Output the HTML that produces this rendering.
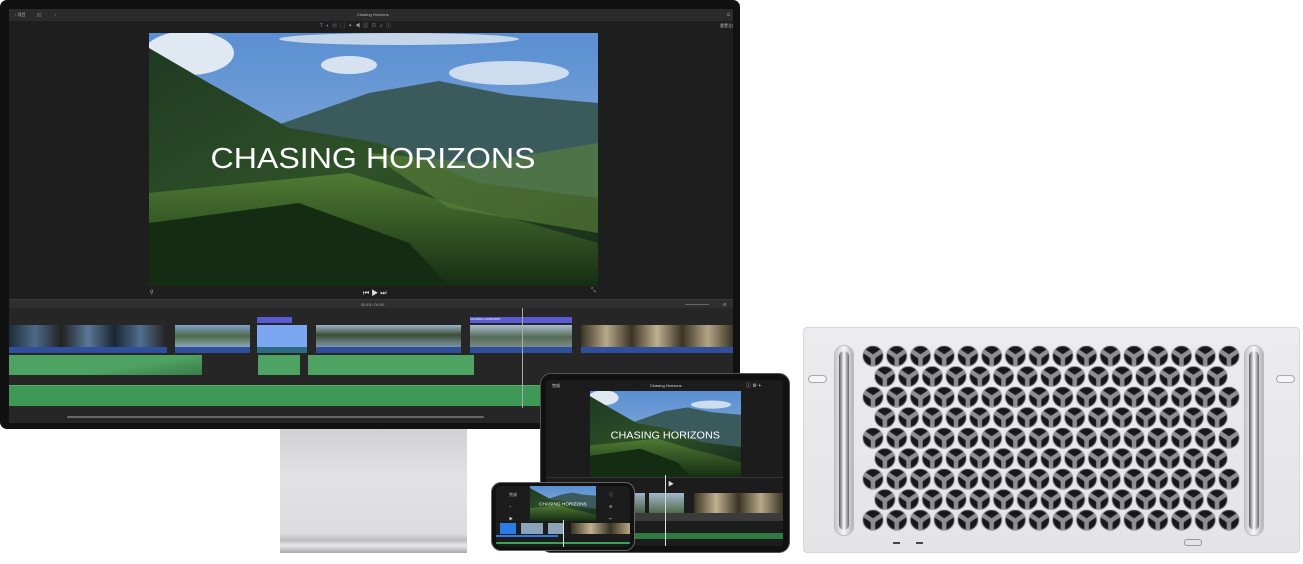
<!DOCTYPE html>
<html><head><meta charset="utf-8"><style>
*{margin:0;padding:0;box-sizing:border-box}
body{width:1303px;height:564px;background:#fff;position:relative;overflow:hidden;font-family:"Liberation Sans","Noto Sans CJK SC",sans-serif}
.a{position:absolute;white-space:nowrap}
</style></head><body>
<svg width="0" height="0" style="position:absolute">
<defs>
<linearGradient id="sky" x1="0" y1="0" x2="0" y2="1"><stop offset="0" stop-color="#5a8fd2"/><stop offset="1" stop-color="#9db9dc"/></linearGradient>
<linearGradient id="hill" x1="0" y1="0" x2="1" y2="1"><stop offset="0" stop-color="#1f3a22"/><stop offset=".5" stop-color="#2f5228"/><stop offset="1" stop-color="#15291a"/></linearGradient>
<linearGradient id="hill2" x1="0" y1="0" x2="0" y2="1"><stop offset="0" stop-color="#4f7a33"/><stop offset="1" stop-color="#162e14"/></linearGradient>
</defs></svg>

<!-- stand -->
<div class="a" style="left:280px;top:426px;width:187px;height:127px;background:linear-gradient(180deg,#d0d0d3,#e2e2e4 40%,#dcdcde 85%,#bdbdc0 90%,#e8e8ea 94%,#a9a9ac)"></div>

<!-- monitor -->
<div class="a" style="left:0;top:0;width:740px;height:429px;background:#111;border-radius:7px"></div>
<div class="a" style="left:9px;top:9px;width:724px;height:414px;background:#1e1e1e;overflow:hidden">
  <div class="a" style="left:0;top:0;width:724px;height:12px;background:#2b2b2b;color:#bbb;font-size:4px;line-height:12px">
    <span class="a" style="left:6px">‹ 项目</span><span class="a" style="left:28px">▯▯</span><span class="a" style="left:45px">↓</span>
    <span class="a" style="left:348px">Chasing Horizons</span><span class="a" style="left:718px">⏻</span>
  </div>
  <div class="a" style="left:311px;top:13px;font-size:5px;color:#999;letter-spacing:3px"><span style="color:#4b8df0">T</span>◐❀▢✦◀▥⊙♫ⓘ</div>
  <div class="a" style="left:711px;top:14px;font-size:4px;color:#bbb">重置全部</div>
  <!-- video -->
  <svg class="a" style="left:140px;top:24px" width="449" height="253" viewBox="0 0 449 253" preserveAspectRatio="none">
    <rect width="449" height="253" fill="url(#sky)"/>
    <ellipse cx="40" cy="20" rx="45" ry="22" fill="#e0e8f2"/><ellipse cx="200" cy="32" rx="28" ry="9" fill="#d6e2f0"/><ellipse cx="360" cy="40" rx="60" ry="12" fill="#cddcee"/><ellipse cx="250" cy="6" rx="120" ry="6" fill="#c5d5ea"/>
    <polygon points="0,30 120,95 220,60 290,48 360,62 449,70 449,253 0,253" fill="#3b5a5c"/>
    <polygon points="0,15 60,50 140,95 230,110 330,150 449,165 449,253 0,253" fill="url(#hill)"/>
    <polygon points="0,160 100,150 200,140 300,170 380,190 449,210 449,253 0,253" fill="url(#hill2)"/>
    <polygon points="220,120 330,130 449,110 449,200 300,175" fill="#5d843a" opacity=".6"/>
    <polygon points="0,190 150,170 260,210 300,253 0,253" fill="#142d12"/>
    <text x="224" y="135" text-anchor="middle" fill="#fff" font-size="29" font-family="Liberation Sans" textLength="325" lengthAdjust="spacingAndGlyphs">CHASING HORIZONS</text>
  </svg>
  <div class="a" style="left:141px;top:280px;font-size:6px;color:#aaa">ǫ</div>
  <div class="a" style="left:354px;top:279px;font-size:7px;color:#ddd">⏮ ▶ ⏭</div>
  <div class="a" style="left:582px;top:279px;font-size:6px;color:#aaa">⤡</div>
  <!-- timeline -->
  <div class="a" style="left:0;top:290px;width:724px;height:9px;background:#2e2e2e;border-top:1px solid #3a3a3a;font-size:4px;color:#aaa;line-height:9px"><span class="a" style="left:352px">00:15 / 00:30</span><span class="a" style="left:676px;top:4px;width:24px;height:1px;background:#666"></span><span class="a" style="left:714px">⚙</span></div>
  <div class="a" style="left:0;top:299px;width:724px;height:115px;background:#262626"></div>
  <div class="a" style="left:0;top:316px;width:158px;height:28px;background:linear-gradient(90deg,#1e2c3a,#4c6a88,#222,#5a7898,#1b2633,#4f6e8c,#222);border-bottom:6px solid #2f4f9d"></div>
  <div class="a" style="left:166px;top:316px;width:75px;height:28px;background:linear-gradient(180deg,#7fa0c8,#4d6a47 50%,#8aa6b7);border-bottom:6px solid #2f4f9d"></div>
  <div class="a" style="left:248px;top:308px;width:35px;height:6px;background:#5a5ad6"></div>
  <div class="a" style="left:248px;top:316px;width:50px;height:28px;background:#7aa6f2;border-bottom:6px solid #2e6a80"></div>
  <div class="a" style="left:307px;top:316px;width:145px;height:28px;background:linear-gradient(180deg,#9bb3c9,#3b4d37 45%,#7e96a6);border-bottom:6px solid #2f4f9d"></div>
  <div class="a" style="left:461px;top:308px;width:102px;height:6px;background:#5a5ad6;font-size:3px;color:#fff">CHASING HORIZONS</div>
  <div class="a" style="left:461px;top:316px;width:102px;height:28px;background:linear-gradient(180deg,#a8bbd0,#556b55 55%,#7c8c88);border-bottom:6px solid #2f4f9d"></div>
  <div class="a" style="left:572px;top:316px;width:152px;height:28px;background:linear-gradient(90deg,#3a3424,#b8a98a,#3a3424,#c0b090,#3a3424,#b5a585,#3a3424);border-bottom:6px solid #2f4f9d"></div>
  <div class="a" style="left:0;top:346px;width:193px;height:20px;background:linear-gradient(170deg,#4fa362 60%,#3a7a48)"></div>
  <div class="a" style="left:249px;top:346px;width:42px;height:20px;background:#4fa362"></div>
  <div class="a" style="left:299px;top:346px;width:166px;height:20px;background:#4fa362"></div>
  <div class="a" style="left:0;top:376px;width:724px;height:21px;background:#3f9956;border-top:1px solid #56ad68"></div>
  <div class="a" style="left:58px;top:407px;width:417px;height:2px;background:#666;border-radius:1px"></div>
  <div class="a" style="left:513px;top:299px;width:1px;height:100px;background:#aaa"></div>
</div>

<!-- iPad -->
<div class="a" style="left:540px;top:373px;width:250px;height:180px;background:#111;border-radius:11px;border:1px solid #555"></div>
<div class="a" style="left:546px;top:380px;width:237px;height:166px;background:#1c1c1c;overflow:hidden;border-radius:4px">
  <div class="a" style="left:6px;top:3px;font-size:4px;color:#ddd">完成</div>
  <div class="a" style="left:104px;top:3px;font-size:4px;color:#ddd">Chasing Horizons</div>
  <div class="a" style="left:200px;top:2px;font-size:5px;color:#ddd">ⓘ ⚙ +</div>
  <svg class="a" style="left:44px;top:11px" width="151" height="86" viewBox="0 0 449 253" preserveAspectRatio="none">
    <rect width="449" height="253" fill="url(#sky)"/>
    <ellipse cx="40" cy="20" rx="45" ry="22" fill="#e0e8f2"/><ellipse cx="360" cy="40" rx="60" ry="12" fill="#cddcee"/>
    <polygon points="0,30 120,95 220,60 290,48 360,62 449,70 449,253 0,253" fill="#3b5a5c"/>
    <polygon points="0,15 60,50 140,95 230,110 330,150 449,165 449,253 0,253" fill="url(#hill)"/>
    <polygon points="0,160 100,150 200,140 300,170 380,190 449,210 449,253 0,253" fill="url(#hill2)"/>
    <polygon points="0,190 150,170 260,210 300,253 0,253" fill="#142d12"/>
    <text x="224" y="140" text-anchor="middle" fill="#fff" font-size="30" textLength="325" lengthAdjust="spacingAndGlyphs">CHASING HORIZONS</text>
  </svg>
  <div class="a" style="left:0;top:97px;width:237px;height:1px;background:#333"></div>
  <div class="a" style="left:122px;top:99px;font-size:6px;color:#ddd">▶</div>
  <div class="a" style="left:57px;top:113px;width:42px;height:20px;background:linear-gradient(180deg,#9fb3c6,#4a6045)"></div>
  <div class="a" style="left:103px;top:113px;width:35px;height:20px;background:linear-gradient(180deg,#a3b8cc,#516a4c)"></div>
  <div class="a" style="left:148px;top:113px;width:89px;height:20px;background:linear-gradient(90deg,#3a3424,#c0b090,#3a3424,#b8a888,#3a3424)"></div>
  <div class="a" style="left:0;top:133px;width:237px;height:8px;background:#3b3b3b"></div>
  <div class="a" style="left:0;top:153px;width:237px;height:6px;background:#2e7a42"></div>
  <div class="a" style="left:119px;top:95px;width:1px;height:71px;background:#ddd"></div>
</div>

<!-- iPhone -->
<div class="a" style="left:491px;top:482px;width:144px;height:69px;background:#111;border-radius:10px;border:1px solid #666"></div>
<div class="a" style="left:496px;top:486px;width:134px;height:61px;background:#1c1c1c;overflow:hidden;border-radius:5px">
  <svg class="a" style="left:34px;top:0" width="66" height="35" viewBox="0 0 449 253" preserveAspectRatio="none">
    <rect width="449" height="253" fill="url(#sky)"/>
    <polygon points="0,30 120,95 220,60 290,48 360,62 449,70 449,253 0,253" fill="#3b5a5c"/>
    <polygon points="0,15 60,50 140,95 230,110 330,150 449,165 449,253 0,253" fill="url(#hill)"/>
    <polygon points="0,160 100,150 200,140 300,170 380,190 449,210 449,253 0,253" fill="url(#hill2)"/>
    <text x="224" y="140" text-anchor="middle" fill="#fff" font-size="30" textLength="325" lengthAdjust="spacingAndGlyphs">CHASING HORIZONS</text>
  </svg>
  <div class="a" style="left:13px;top:3px;font-size:4px;color:#ccc;line-height:12px">完成<br>+<br>▶</div>
  <div class="a" style="left:113px;top:3px;font-size:4px;color:#ccc;line-height:12px">ⓘ<br>⚙<br>↩</div>
  <div class="a" style="left:4px;top:37px;width:16px;height:11px;background:#2a7ae8"></div>
  <div class="a" style="left:25px;top:37px;width:22px;height:11px;background:#8aa3b8"></div>
  <div class="a" style="left:52px;top:37px;width:16px;height:11px;background:#8aa3b8"></div>
  <div class="a" style="left:75px;top:37px;width:59px;height:11px;background:linear-gradient(90deg,#3a3424,#c0b090,#3a3424,#b8a888)"></div>
  <div class="a" style="left:0;top:49px;width:62px;height:2px;background:#2a7ae8"></div>
  <div class="a" style="left:0;top:56px;width:134px;height:2px;background:#3aa35a"></div>
  <div class="a" style="left:67px;top:34px;width:1px;height:27px;background:#ddd"></div>
</div>

<!-- Mac Pro -->
<div class="a" style="left:803px;top:327px;width:497px;height:226px;background:linear-gradient(180deg,#ececee,#e4e4e6);border-radius:4px;border:1px solid #d8d8da"></div>
<div class="a" style="left:834px;top:345px;width:20px;height:191px;border-radius:10px;background:linear-gradient(90deg,#c8c8cb,#f7f7f7,#b4b4b8);border:1px solid #bdbdc0"></div>
<div class="a" style="left:839px;top:351px;width:10px;height:179px;border-radius:5px;background:linear-gradient(90deg,#555,#fff 50%,#666);"></div>
<div class="a" style="left:1244px;top:345px;width:20px;height:191px;border-radius:10px;background:linear-gradient(90deg,#c8c8cb,#f7f7f7,#b4b4b8);border:1px solid #bdbdc0"></div>
<div class="a" style="left:1249px;top:351px;width:10px;height:179px;border-radius:5px;background:linear-gradient(90deg,#555,#fff 50%,#666);"></div>
<div class="a" style="left:808px;top:375px;width:19px;height:8px;border-radius:4px;border:1px solid #aaa;background:#f4f4f4"></div>
<div class="a" style="left:1276px;top:375px;width:19px;height:8px;border-radius:4px;border:1px solid #aaa;background:#f4f4f4"></div>
<div class="a" style="left:893px;top:542px;width:7px;height:2px;background:#444"></div>
<div class="a" style="left:916px;top:542px;width:7px;height:2px;background:#444"></div>
<div class="a" style="left:1184px;top:539px;width:18px;height:7px;border-radius:3px;border:1px solid #999"></div>
<svg class="a" style="left:0;top:0" width="1303" height="564">
<defs>
<radialGradient id="hole" cx=".5" cy=".5" r=".5"><stop offset="0" stop-color="#202020"/><stop offset=".8" stop-color="#151515"/><stop offset="1" stop-color="#3a3a3a"/></radialGradient>
<g id="h"><circle r="10.3" fill="url(#hole)"/><path d="M0,1 L-9,-5 M0,1 L9,-5 M0,1 L0,11" stroke="#8e8e90" stroke-width="4.5"/><circle r="2.8" cy="1" fill="#8e8e90"/><circle r="10.3" fill="none" stroke="#b0b0b2" stroke-width=".8"/></g>
<pattern id="po" patternUnits="userSpaceOnUse" x="861.13" y="345.75" width="23.73" height="41"><use href="#h" x="11.87" y="10.25"/></pattern>
<pattern id="pe" patternUnits="userSpaceOnUse" x="873" y="366.25" width="23.73" height="41"><use href="#h" x="11.87" y="10.25"/></pattern>
</defs>
<rect x="861" y="345" width="380" height="22" fill="url(#po)"/>
<rect x="861" y="386" width="380" height="22" fill="url(#po)"/>
<rect x="861" y="427" width="380" height="22" fill="url(#po)"/>
<rect x="861" y="468" width="380" height="22" fill="url(#po)"/>
<rect x="861" y="509" width="380" height="22" fill="url(#po)"/>
<rect x="873" y="366" width="356" height="21" fill="url(#pe)"/>
<rect x="873" y="407" width="356" height="21" fill="url(#pe)"/>
<rect x="873" y="448" width="356" height="21" fill="url(#pe)"/>
<rect x="873" y="489" width="356" height="21" fill="url(#pe)"/>
</svg>
</body></html>
